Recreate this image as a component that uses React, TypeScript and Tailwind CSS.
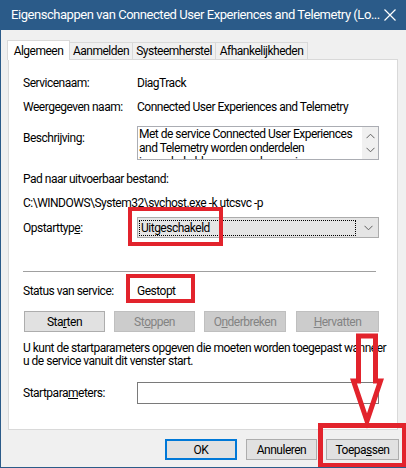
import React from "react";

function ChevronDown() {
  return (
    <svg width="9" height="6" viewBox="0 0 9 6" className="block">
      <path d="M0.5 0.8 L4.5 4.8 L8.5 0.8" fill="none" stroke="#606060" strokeWidth="1" />
    </svg>
  );
}

function ChevronUp() {
  return (
    <svg width="9" height="6" viewBox="0 0 9 6" className="block">
      <path d="M0.5 5.2 L4.5 1.2 L8.5 5.2" fill="none" stroke="#606060" strokeWidth="1" />
    </svg>
  );
}

function Row({ label, children }: { label: React.ReactNode; children?: React.ReactNode }) {
  return (
    <div className="flex items-center h-[20px]">
      <div className="w-[114px] shrink-0 whitespace-nowrap">{label}</div>
      <div className="flex-1 whitespace-nowrap">{children}</div>
    </div>
  );
}

export default function App() {
  return (
    <div className="relative w-[406px] h-[468px] overflow-hidden bg-[#f0f0f0] border-l border-b border-[#2b5b89] font-['Roboto',sans-serif] text-[12px] tracking-[-0.5px] text-black leading-[20px]">
      {/* title bar */}
      <div className="h-[30px] bg-[#2b5b89] flex items-center justify-between pl-[10px] pr-[10px] text-white">
        <span className="text-[13px] tracking-[-0.45px] whitespace-nowrap">
          Eigenschappen van Connected User Experiences and Telemetry (Lo...
        </span>
        <svg width="12" height="12" viewBox="0 0 12 12" className="block shrink-0">
          <path d="M0.5 0.5 L11.5 11.5 M11.5 0.5 L0.5 11.5" stroke="#ffffff" strokeWidth="1.2" />
        </svg>
      </div>

      {/* tabs */}
      <div className="flex items-end h-[29px] pl-[6px] whitespace-nowrap">
        <div className="relative z-10 h-[20px] w-[63px] -mb-[1px] bg-white border border-b-0 border-[#d9d9d9] flex items-center justify-center">
          Algemeen
        </div>
        <div className="h-[17px] w-[63px] border border-b-0 border-l-0 border-[#d9d9d9] flex items-center justify-center">
          Aanmelden
        </div>
        <div className="h-[17px] w-[83px] border border-b-0 border-l-0 border-[#d9d9d9] flex items-center justify-center">
          Systeemherstel
        </div>
        <div className="h-[17px] w-[92px] border border-b-0 border-l-0 border-[#d9d9d9] flex items-center justify-center">
          Afhankelijkheden
        </div>
      </div>

      {/* panel */}
      <div className="ml-[7px] w-[390px] h-[371px] bg-white border border-[#d9d9d9] pl-[14px] pt-[13px]">
        <Row label="Servicenaam:">DiagTrack</Row>
        <div className="mt-[4px]">
          <Row label="Weergegeven naam:">Connected User Experiences and Telemetry</Row>
        </div>

        <div className="mt-[9px] flex">
          <div className="w-[114px] shrink-0 pt-[2px]">Beschrijving:</div>
          <div className="w-[242px] h-[34px] border border-[#abadb3] flex overflow-hidden">
            <div className="flex-1 pl-[1px] leading-[14px] overflow-hidden">
              Met de service Connected User Experiences and Telemetry worden onderdelen ingeschakeld, waarmee de ervaringen van
            </div>
            <div className="w-[16px] bg-[#f0f0f0] flex flex-col items-center justify-around py-[2px]">
              <ChevronUp />
              <ChevronDown />
            </div>
          </div>
        </div>

        <div className="mt-[9px] h-[20px] flex items-center">Pad naar uitvoerbaar bestand:</div>
        <div className="mt-[4px] h-[20px] flex items-center">C:\WINDOWS\System32\svchost.exe -k utcsvc -p</div>

        <div className="mt-[4px] flex items-center">
          <div className="w-[114px] shrink-0">
            Opstarttyp<span className="underline">e</span>:
          </div>
          <div className="w-[242px] h-[21px] bg-[#e5e5e5] border border-[#acacac] flex items-center pl-[1px] pr-[5px]">
            <div className="flex-1 h-[16px] border border-dotted border-black flex items-center pl-[1px] leading-[14px]">
              Uitgeschakeld
            </div>
            <div className="w-[17px] flex justify-end">
              <ChevronDown />
            </div>
          </div>
        </div>

        <div className="mt-[33px] w-[353px] h-[1px] bg-[#a0a0a0]" />

        <div className="mt-[9px]">
          <Row label="Status van service:">Gestopt</Row>
        </div>

        <div className="mt-[10px] flex h-[21px] whitespace-nowrap">
          <div className="ml-[1px] w-[81px] bg-[#e1e1e1] border border-[#adadad] flex items-center justify-center">
            Sta<span className="underline">r</span>ten
          </div>
          <div className="ml-[9px] w-[81px] bg-[#cccccc] border border-[#bfbfbf] text-[#838383] flex items-center justify-center">
            St<span className="underline">o</span>ppen
          </div>
          <div className="ml-[9px] w-[82px] bg-[#cccccc] border border-[#bfbfbf] text-[#838383] flex items-center justify-center">
            O<span className="underline">n</span>derbreken
          </div>
          <div className="ml-[10px] w-[83px] bg-[#cccccc] border border-[#bfbfbf] text-[#838383] flex items-center justify-center">
            <span className="underline">H</span>ervatten
          </div>
        </div>

        <div className="mt-[10px] leading-[13px] w-[370px]">
          U kunt de startparameters opgeven die moeten worden toegepast wanneer u de service vanuit dit venster start.
        </div>

        <div className="mt-[14px] flex items-center">
          <div className="w-[114px] shrink-0">
            Startpara<span className="underline">m</span>eters:
          </div>
          <div className="w-[242px] h-[22px] bg-white border border-[#7a7a7a]" />
        </div>
      </div>

      {/* footer buttons */}
      <div className="mt-[9px] flex justify-end pr-[7px] gap-[9px] h-[21px]">
        <div className="w-[72px] bg-[#e1e1e1] border-2 border-[#0078d7] flex items-center justify-center">OK</div>
        <div className="w-[71px] bg-[#e1e1e1] border border-[#adadad] flex items-center justify-center">Annuleren</div>
        <div className="w-[73px] bg-[#e1e1e1] border border-[#adadad] flex items-center justify-center">
          Toepa<span className="underline">s</span>sen
        </div>
      </div>

      {/* annotations drawn over the screenshot */}
      <div className="absolute left-[127px] top-[207px] w-[95px] h-[39px] border-4 border-[#e2232c]" />
      <div className="absolute left-[125px] top-[274px] w-[69px] h-[29px] border-4 border-[#e2232c]" />
      <div className="absolute left-[317px] top-[423px] w-[89px] h-[45px] border-[5px] border-[#e2232c]" />
      <svg className="absolute left-0 top-0 pointer-events-none" width="406" height="468" viewBox="0 0 406 468">
        <polygon
          points="357.5,336 374.5,336 374.5,381 379.5,381 366,421 352.5,381 357.5,381"
          fill="none"
          stroke="#e2232c"
          strokeWidth="5"
          strokeLinejoin="miter"
        />
      </svg>
    </div>
  );
}
